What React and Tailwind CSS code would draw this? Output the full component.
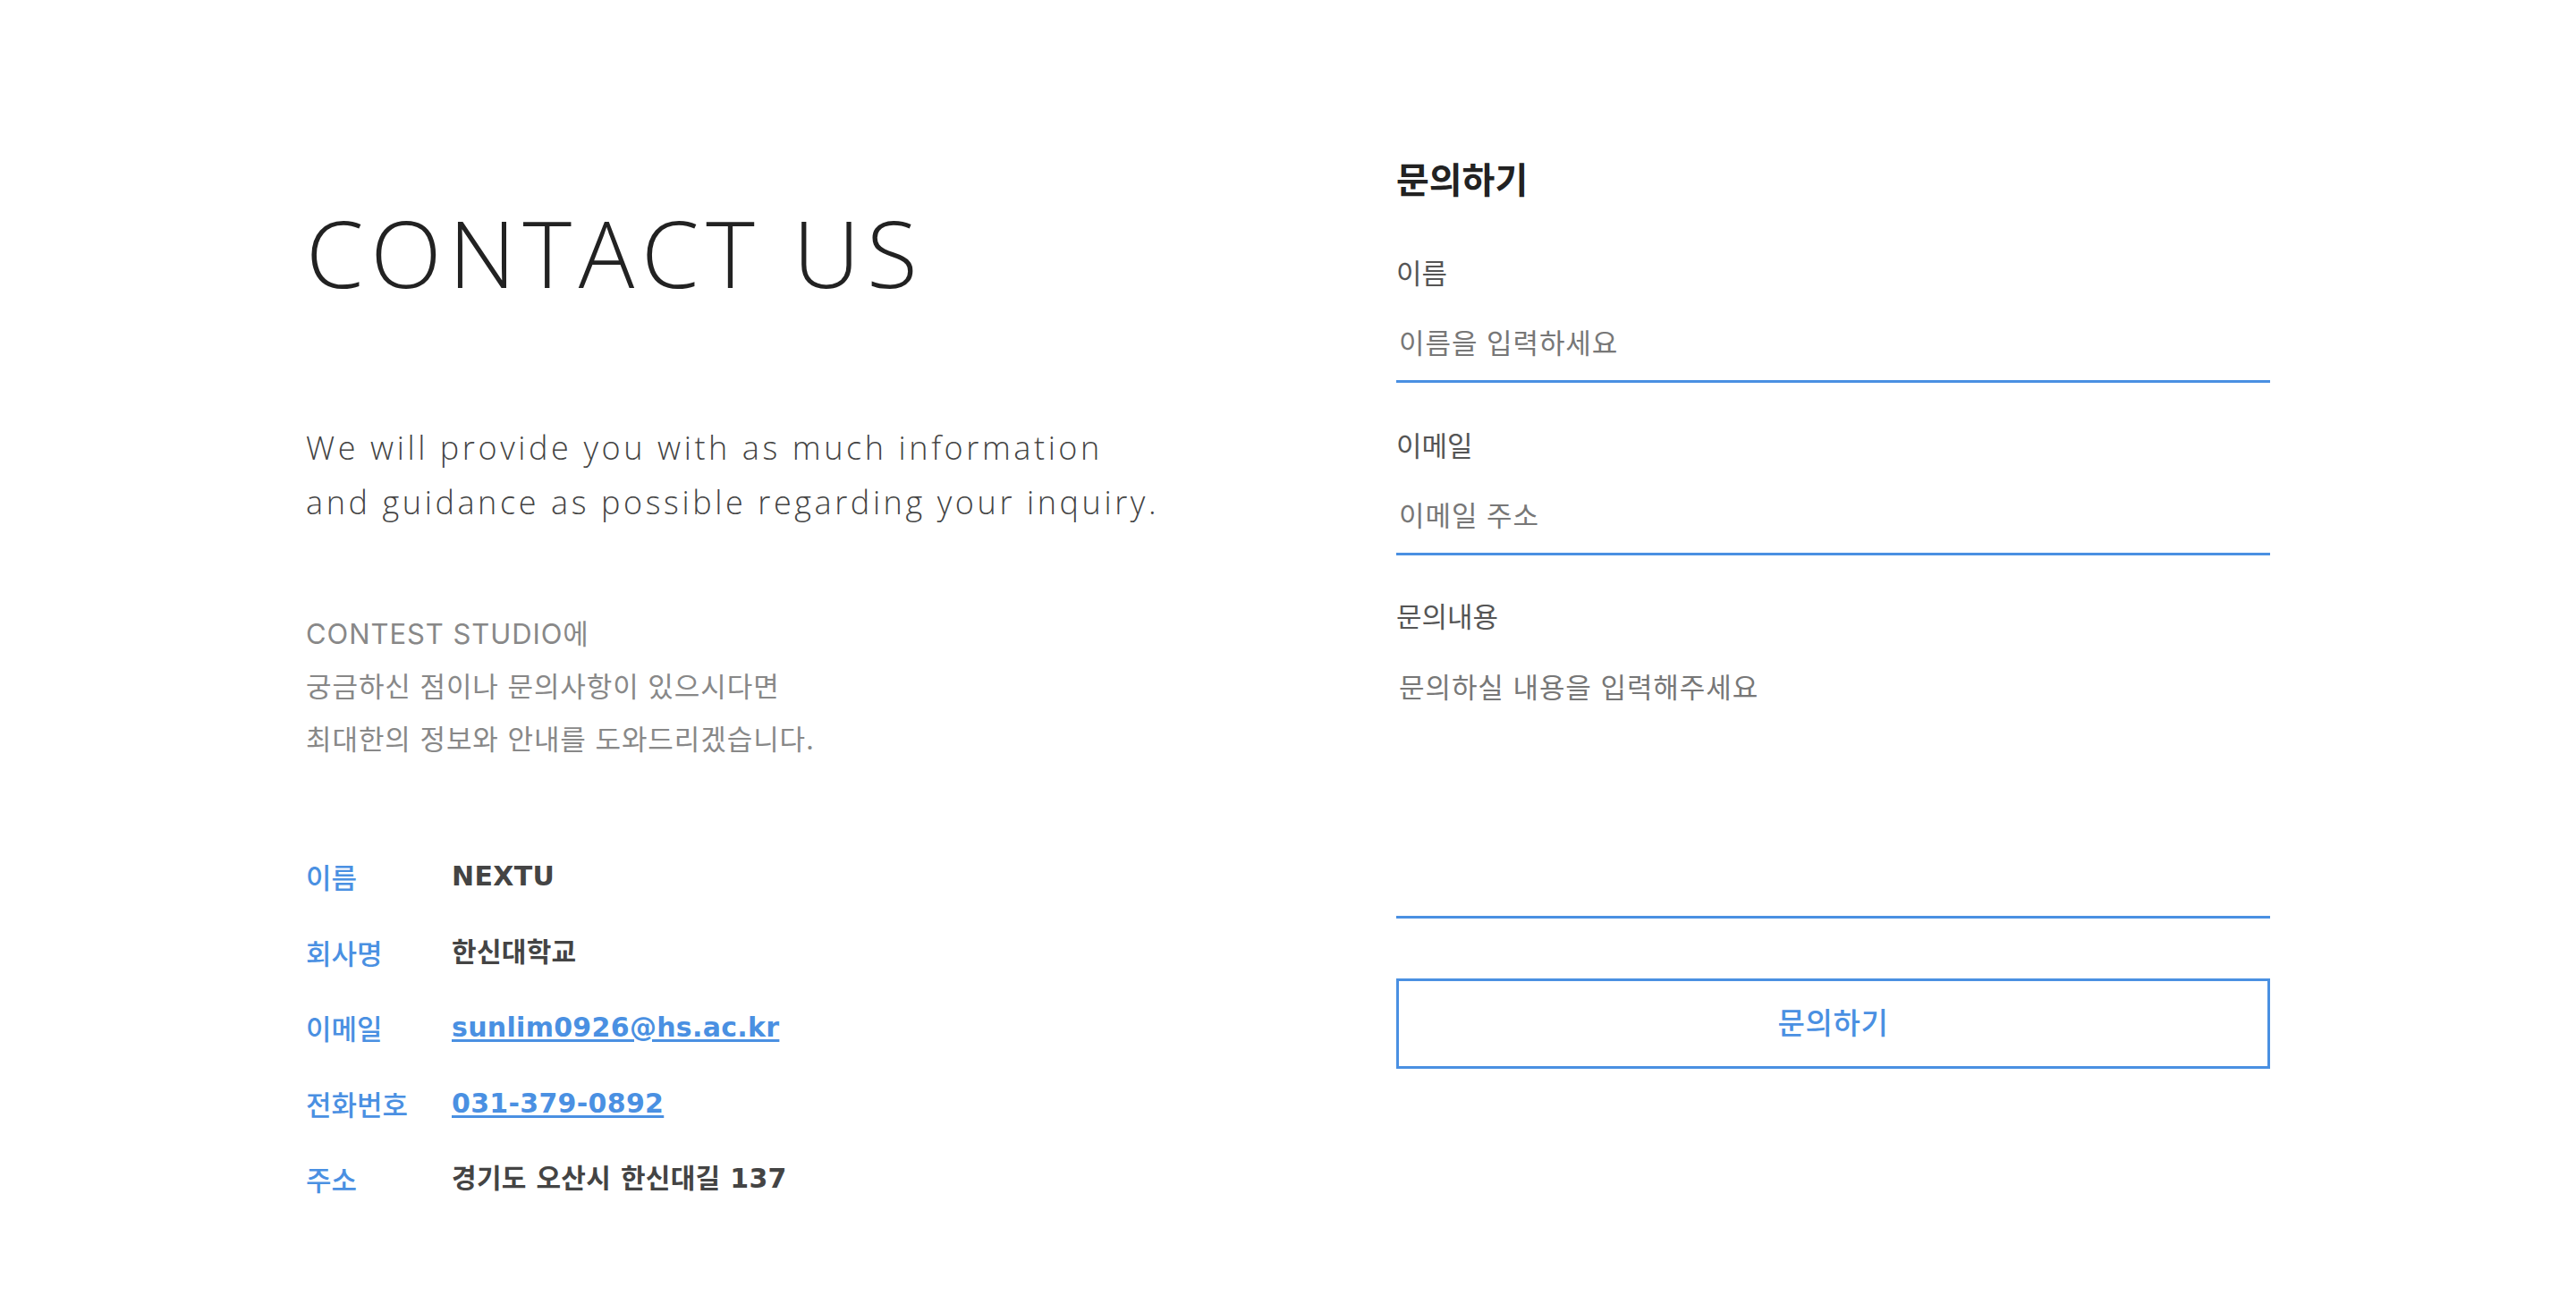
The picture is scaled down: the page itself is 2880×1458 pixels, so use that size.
import { useState } from 'react';

const info = [
  { label: '이름', value: 'NEXTU' },
  { label: '회사명', value: '한신대학교' },
  { label: '이메일', value: 'sunlim0926@hs.ac.kr', href: 'mailto:sunlim0926@hs.ac.kr' },
  { label: '전화번호', value: '031-379-0892', href: 'tel:031-379-0892' },
  { label: '주소', value: '경기도 오산시 한신대길 137' },
];

export default function App() {
  const [form, setForm] = useState({ name: '', email: '', message: '' });

  const update = (key) => (e) => setForm({ ...form, [key]: e.target.value });

  return (
    <div className="min-h-screen bg-white">
      {/* header shadow */}
      <div className="h-px bg-white shadow-[0_0_34px_rgba(0,0,0,0.1)]" />

      <div className="mx-auto flex w-[2196px] justify-between pt-[177px]">
        {/* Left: intro + info */}
        <div className="flex-1 pt-[52px] font-['Open_Sans','Noto_Sans_CJK_KR',sans-serif]">
          <h1 className="text-[104px] leading-none font-light tracking-[0.075em] text-[#222]">
            CONTACT US
          </h1>

          <p className="mt-[136px] text-[36px] leading-[61px] font-light tracking-[0.1em] text-[#444]">
            We will provide you with as much information
            <br />
            and guidance as possible regarding your inquiry.
          </p>

          <p className="mt-[87px] font-['Inter','Noto_Sans_CJK_KR',sans-serif] text-[31px] leading-[59px] tracking-[0.03em] text-[#888]">
            CONTEST STUDIO에
            <br />
            궁금하신 점이나 문의사항이 있으시다면
            <br />
            최대한의 정보와 안내를 도와드리겠습니다.
          </p>

          <dl className="mt-[101px] flex flex-col gap-[39.5px]">
            {info.map((row) => (
              <div key={row.label} className="flex text-[30px] leading-[45px]">
                <dt className="w-[163px] font-['Noto_Sans_CJK_KR',sans-serif] text-[31px] font-medium text-[#4a90e2]">
                  {row.label}
                </dt>
                <dd className="font-['DejaVu_Sans','Noto_Sans_CJK_KR',sans-serif] font-bold tracking-[0.01em] text-[#444]">
                  {row.href ? (
                    <a href={row.href} className="text-[#4a90e2] underline underline-offset-[3px] decoration-[3px]">
                      {row.value}
                    </a>
                  ) : (
                    row.value
                  )}
                </dd>
              </div>
            ))}
          </dl>
        </div>

        {/* Right: inquiry form */}
        <form
          className="w-[977px] font-['Inter','Noto_Sans_CJK_KR',sans-serif]"
          onSubmit={(e) => e.preventDefault()}
        >
          <h2 className="text-[40px] leading-[48px] font-bold text-[#222]">문의하기</h2>

          <label className="mt-[60px] block text-[31px] leading-[40px] text-[#555]">이름</label>
          <input
            type="text"
            value={form.name}
            onChange={update('name')}
            placeholder="이름을 입력하세요"
            className="mt-[16px] block h-[86px] w-full border-b-[3px] border-[#4a90e2] pl-[3px] text-[31px] tracking-[0.03em] text-[#333] outline-none placeholder:text-[#777]"
          />

          <label className="mt-[51px] block text-[31px] leading-[40px] text-[#555]">이메일</label>
          <input
            type="email"
            value={form.email}
            onChange={update('email')}
            placeholder="이메일 주소"
            className="mt-[16px] block h-[86px] w-full border-b-[3px] border-[#4a90e2] pl-[3px] text-[31px] tracking-[0.03em] text-[#333] outline-none placeholder:text-[#777]"
          />

          <label className="mt-[49px] block text-[31px] leading-[40px] text-[#555]">문의내용</label>
          <textarea
            value={form.message}
            onChange={update('message')}
            placeholder="문의하실 내용을 입력해주세요"
            className="mt-[16px] block h-[301px] w-full resize-none border-b-[3px] border-[#4a90e2] pt-[23px] pl-[3px] text-[31px] leading-[40px] tracking-[0.03em] text-[#333] outline-none placeholder:text-[#777]"
          />

          <button
            type="submit"
            className="mt-[67px] block h-[101px] w-full border-[3px] border-[#4a90e2] bg-white text-[33px] font-medium tracking-[0.02em] text-[#4a90e2]"
          >
            문의하기
          </button>
        </form>
      </div>
    </div>
  );
}
